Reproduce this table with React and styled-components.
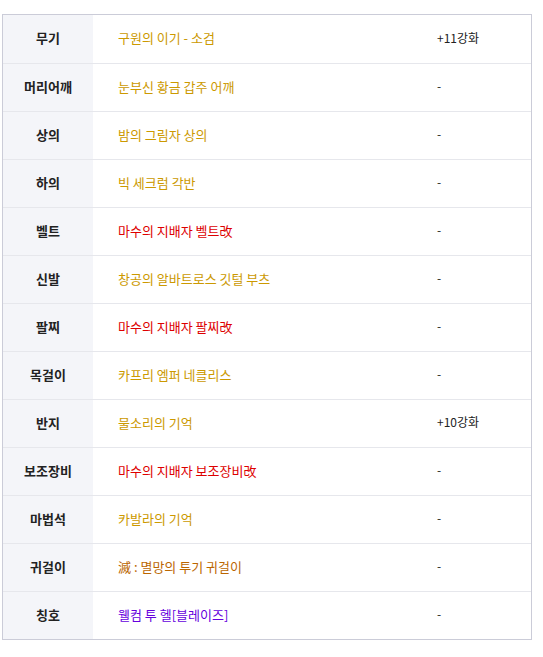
import React from "react";
import styled, { createGlobalStyle } from "styled-components";

const GlobalStyle = createGlobalStyle`
    body {
        margin: 0;
        background: #ffffff;
        font-family: "Noto Sans CJK KR", "Noto Sans", sans-serif;
    }
`;

const Page = styled.div`
    padding: 14px 0 0 2px;
`;

const Table = styled.div`
    width: 530px;
    box-sizing: border-box;
    border: 1px solid #cbccd8;
    display: flex;
    flex-direction: column;
`;

const Row = styled.div`
    display: grid;
    grid-template-columns: 90px 319px 1fr;
    height: 48px;
    border-top: ${(p) => (p.$first ? "none" : "1px solid #e6e7ec")};
    box-sizing: border-box;
`;

const Cell = styled.div`
    display: flex;
    align-items: center;
    padding-bottom: 3px;
    box-sizing: border-box;
    line-height: 1;
`;

const Label = styled(Cell)`
    background: #f4f5f9;
    justify-content: center;
    font-size: 13px;
    font-weight: 700;
    color: #222222;
`;

const Name = styled(Cell)`
    padding-left: 25px;
    font-size: 13px;
    color: ${(p) => p.$color};
`;

const Extra = styled(Cell)`
    padding-left: 25px;
    font-size: 12px;
    color: #222222;
`;

const GOLD = "#cc9900";
const RED = "#dd0000";
const ORANGE = "#bb6600";
const PURPLE = "#6600dd";

const items = [
    { slot: "무기", name: "구원의 이기 - 소검", color: GOLD, extra: "+11강화" },
    { slot: "머리어깨", name: "눈부신 황금 갑주 어깨", color: GOLD, extra: "-" },
    { slot: "상의", name: "밤의 그림자 상의", color: GOLD, extra: "-" },
    { slot: "하의", name: "빅 세크럼 각반", color: GOLD, extra: "-" },
    { slot: "벨트", name: "마수의 지배자 벨트改", color: RED, extra: "-" },
    { slot: "신발", name: "창공의 알바트로스 깃털 부츠", color: GOLD, extra: "-" },
    { slot: "팔찌", name: "마수의 지배자 팔찌改", color: RED, extra: "-" },
    { slot: "목걸이", name: "카프리 엠퍼 네클리스", color: GOLD, extra: "-" },
    { slot: "반지", name: "물소리의 기억", color: GOLD, extra: "+10강화" },
    { slot: "보조장비", name: "마수의 지배자 보조장비改", color: RED, extra: "-" },
    { slot: "마법석", name: "카발라의 기억", color: GOLD, extra: "-" },
    { slot: "귀걸이", name: "滅 : 멸망의 투기 귀걸이", color: ORANGE, extra: "-" },
    { slot: "칭호", name: "웰컴 투 헬[블레이즈]", color: PURPLE, extra: "-" },
];

const App = () => {
    return (
        <Page>
            <GlobalStyle />
            <Table>
                {items.map((item, i) => (
                    <Row key={item.slot} $first={i === 0}>
                        <Label>{item.slot}</Label>
                        <Name $color={item.color}>{item.name}</Name>
                        <Extra>{item.extra}</Extra>
                    </Row>
                ))}
            </Table>
        </Page>
    );
};

export default App;
